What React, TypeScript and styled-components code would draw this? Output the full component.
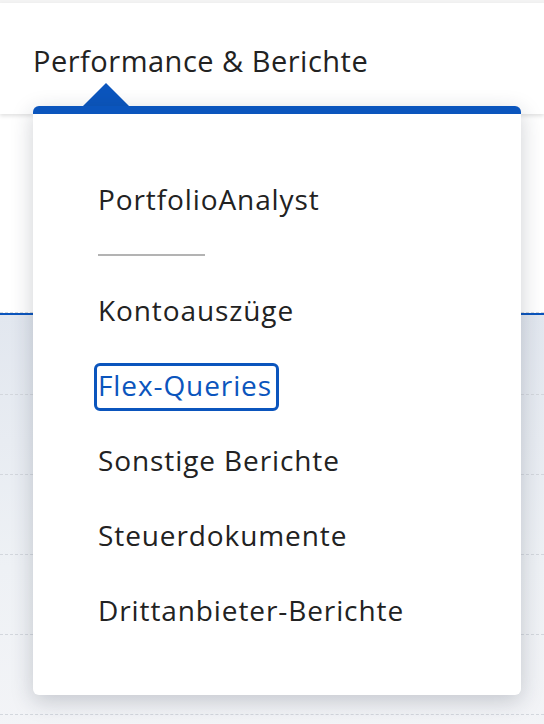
import React from 'react'
import styled, { createGlobalStyle } from 'styled-components'

const GlobalStyle = createGlobalStyle`
  html, body {
    margin: 0;
    padding: 0;
    background: #ffffff;
    font-family: "Open Sans", "Liberation Sans", sans-serif;
  }
`

const Page = styled.div`
  position: relative;
  width: 544px;
  height: 724px;
  overflow: hidden;
  background: #ffffff;
`

const TopStrip = styled.div`
  height: 3px;
  background: #f3f3f3;
`

const Header = styled.header`
  position: relative;
  z-index: 1;
  height: 111px;
  background: #ffffff;
  box-shadow: 0 2px 4px rgba(0, 0, 0, 0.12);
  display: flex;
  align-items: flex-start;
  padding: 0 33px;
`

const NavTab = styled.div`
  margin-top: 40px;
  font-size: 29px;
  line-height: 36px;
  letter-spacing: 0.5px;
  color: #222222;
`

const WhiteSection = styled.section`
  height: 198px;
  background: #ffffff;
  border-bottom: 1px dashed #d6d9de;
`

const BlueRule = styled.div`
  height: 2px;
  background: #0b55bd;
`

const TableArea = styled.div`
  height: 420px;
  background: linear-gradient(180deg, #e2e7ef 0%, #eef1f5 60%, #f3f4f7 100%);
`

const TableRow = styled.div`
  height: 79px;
  border-bottom: 1px dashed #d3d7dd;
`

const Dropdown = styled.nav`
  position: absolute;
  z-index: 5;
  top: 83px;
  left: 33px;
  width: 488px;
`

const Arrow = styled.div`
  margin-left: 50px;
  width: 0;
  height: 0;
  border-left: 23px solid transparent;
  border-right: 23px solid transparent;
  border-bottom: 23px solid #0b55bd;
`

const Panel = styled.div`
  background: #ffffff;
  border-top: 8px solid #0b55bd;
  border-radius: 6px;
  box-shadow: 0 6px 22px rgba(30, 40, 60, 0.22);
  padding: 63px 0 59px 61px;
  display: flex;
  flex-direction: column;
  align-items: flex-start;
  gap: 27px;
`

const Item = styled.a<{ $focused?: boolean }>`
  display: inline-flex;
  align-items: center;
  box-sizing: border-box;
  height: 48px;
  padding: 0 4px 4px 1px;
  border: 3px solid ${({ $focused }) => ($focused ? '#0b55bd' : 'transparent')};
  border-radius: 6px;
  font-size: 28px;
  letter-spacing: 0.9px;
  color: ${({ $focused }) => ($focused ? '#0b55bd' : '#222222')};
  text-decoration: none;
  white-space: nowrap;
`

const Separator = styled.hr`
  margin: 2px 0 5px 4px;
  width: 107px;
  height: 2px;
  border: none;
  background: #b3b3b3;
`

const items = ['Kontoauszüge', 'Flex-Queries', 'Sonstige Berichte', 'Steuerdokumente', 'Drittanbieter-Berichte']

const App: React.FC = () => {
  return (
    <Page>
      <GlobalStyle />
      <TopStrip />
      <Header>
        <NavTab>Performance &amp; Berichte</NavTab>
      </Header>
      <WhiteSection />
      <BlueRule />
      <TableArea>
        {[0, 1, 2, 3, 4].map((i) => (
          <TableRow key={i} />
        ))}
      </TableArea>
      <Dropdown>
        <Arrow />
        <Panel>
          <Item href="#">PortfolioAnalyst</Item>
          <Separator />
          {items.map((label) => (
            <Item key={label} href="#" $focused={label === 'Flex-Queries'}>
              {label}
            </Item>
          ))}
        </Panel>
      </Dropdown>
    </Page>
  )
}

export default App
